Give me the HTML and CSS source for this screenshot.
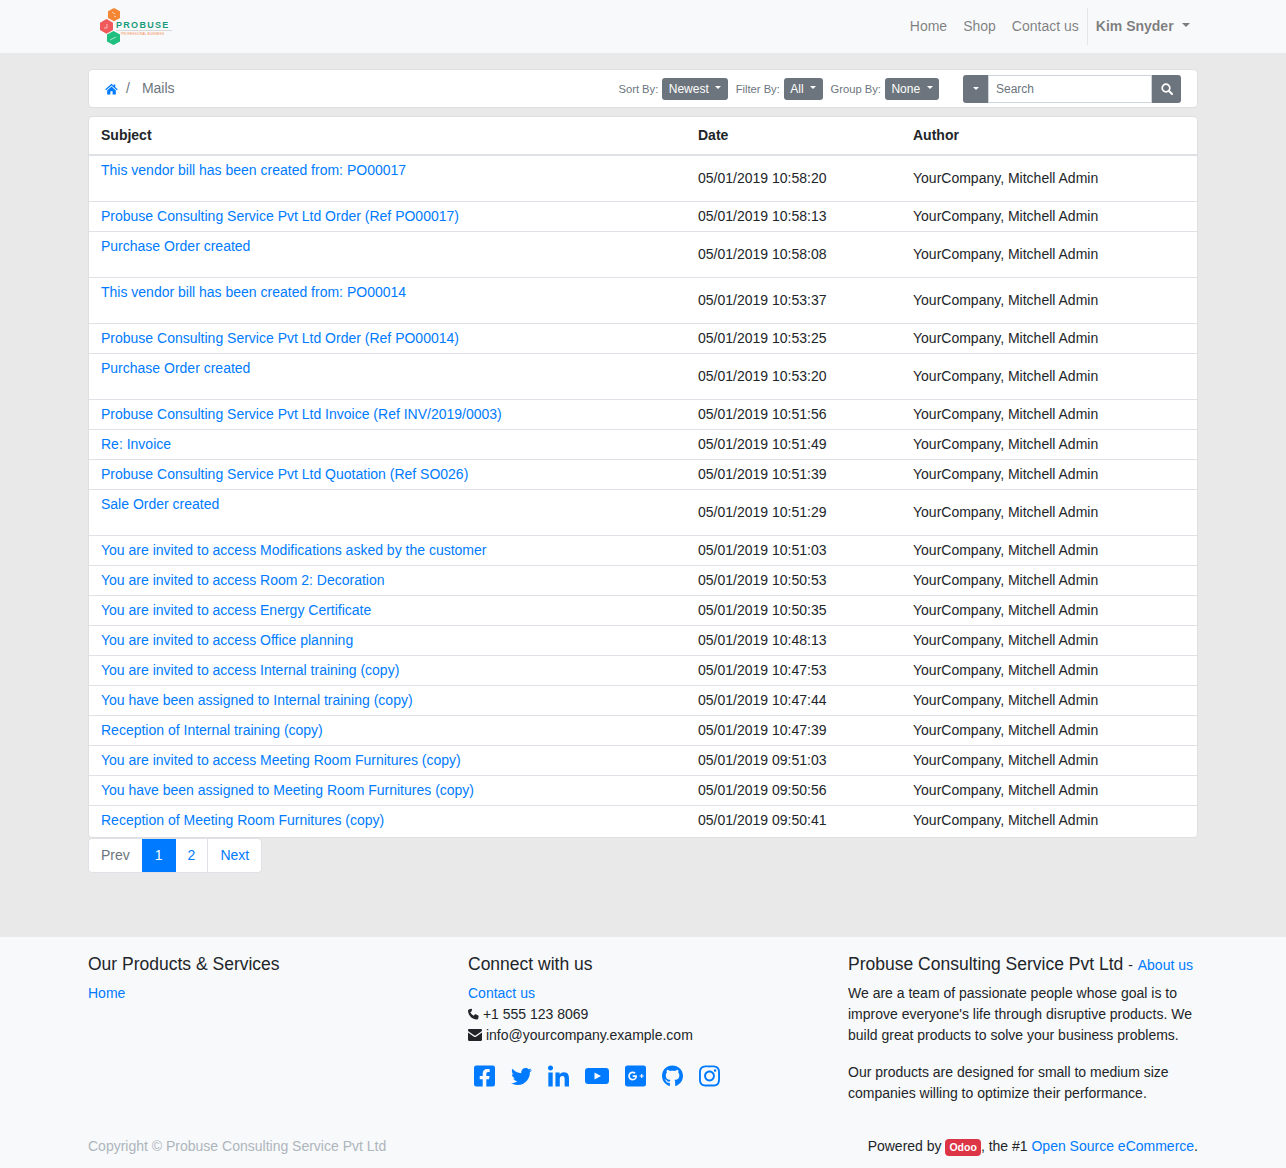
FILE: index.html
```html
<!DOCTYPE html>
<html>
<head>
    <title>Mails</title>
    <link rel="stylesheet" href="styles.css">
</head>
<body>

    <header class="topbar">
        <div class="container topbar-inner">
            <a class="logo" href="#">
                <svg class="logo-mark" width="21" height="37" viewBox="0 0 21 37">
                    <polygon points="14,0 20,3.300 20,10 14,13.300 8,10 8,3.300" fill="#f58634"/>
                    <polygon points="6.500,11 13,14.700 13,22 6.500,25.700 0,22 0,14.700" fill="#f05a5a"/>
                    <polygon points="13.500,23 20,26.500 20,33.500 13.500,37 7,33.500 7,26.500" fill="#1fbf7f"/>
                    <path d="M12 4l3 2M14 8l2 1M4 20h3v-4M10 32l6-3" stroke="#fff" stroke-width="1" fill="none" opacity=".6"/>
                </svg>
                <span class="logo-text">
                    <span class="logo-name">PROBUSE</span>
                    <span class="logo-tag">PROFESSIONAL BUSINESS</span>
                </span>
            </a>
            <nav class="topnav">
                <a href="#">Home</a>
                <a href="#">Shop</a>
                <a href="#">Contact us</a>
                <a href="#" class="user-menu">Kim Snyder <i class="caret"></i></a>
            </nav>
        </div>
    </header>

    <main class="container page">
        <div class="toolbar">
            <div class="crumbs">
                <svg class="home-icon" width="13" height="12" viewBox="0 0 24 22"><path d="M12 1.500L0.500 11.600l1.600 1.800L12 4.700l9.900 8.700 1.600-1.800-4.500-4V2.500h-3.200v2.300zM4 13.600V21h6v-6h4v6h6v-7.400l-8-7z" fill="#007bff"/></svg>
                <span class="crumb-sep">/</span>
                <span class="crumb-now">Mails</span>
            </div>
            <div class="filters">
                <span class="filter-label">Sort By:</span>
                <button class="pill">Newest <i class="caret"></i></button>
                <span class="filter-label">Filter By:</span>
                <button class="pill">All <i class="caret"></i></button>
                <span class="filter-label">Group By:</span>
                <button class="pill">None <i class="caret"></i></button>
            </div>
            <div class="searchbox">
                <button class="search-drop"><i class="caret"></i></button>
                <input class="search-input" type="text" placeholder="Search">
                <button class="search-go">
                    <svg width="12" height="12" viewBox="0 0 12 12"><circle cx="5" cy="5" r="3.800" fill="none" stroke="#fff" stroke-width="1.700"/><path d="M8 8l3 3" stroke="#fff" stroke-width="2" stroke-linecap="round"/></svg>
                </button>
            </div>
        </div>

        <div class="mail-card">
            <table class="mail-table">
                <thead>
                    <tr><th class="col-subject">Subject</th><th class="col-date">Date</th><th>Author</th></tr>
                </thead>
                <tbody>
                    <tr class="tall"><td><a href="#">This vendor bill has been created from: PO00017</a></td><td>05/01/2019 10:58:20</td><td>YourCompany, Mitchell Admin</td></tr>
                    <tr><td><a href="#">Probuse Consulting Service Pvt Ltd Order (Ref PO00017)</a></td><td>05/01/2019 10:58:13</td><td>YourCompany, Mitchell Admin</td></tr>
                    <tr class="tall"><td><a href="#">Purchase Order created</a></td><td>05/01/2019 10:58:08</td><td>YourCompany, Mitchell Admin</td></tr>
                    <tr class="tall"><td><a href="#">This vendor bill has been created from: PO00014</a></td><td>05/01/2019 10:53:37</td><td>YourCompany, Mitchell Admin</td></tr>
                    <tr><td><a href="#">Probuse Consulting Service Pvt Ltd Order (Ref PO00014)</a></td><td>05/01/2019 10:53:25</td><td>YourCompany, Mitchell Admin</td></tr>
                    <tr class="tall"><td><a href="#">Purchase Order created</a></td><td>05/01/2019 10:53:20</td><td>YourCompany, Mitchell Admin</td></tr>
                    <tr><td><a href="#">Probuse Consulting Service Pvt Ltd Invoice (Ref INV/2019/0003)</a></td><td>05/01/2019 10:51:56</td><td>YourCompany, Mitchell Admin</td></tr>
                    <tr><td><a href="#">Re: Invoice</a></td><td>05/01/2019 10:51:49</td><td>YourCompany, Mitchell Admin</td></tr>
                    <tr><td><a href="#">Probuse Consulting Service Pvt Ltd Quotation (Ref SO026)</a></td><td>05/01/2019 10:51:39</td><td>YourCompany, Mitchell Admin</td></tr>
                    <tr class="tall"><td><a href="#">Sale Order created</a></td><td>05/01/2019 10:51:29</td><td>YourCompany, Mitchell Admin</td></tr>
                    <tr><td><a href="#">You are invited to access Modifications asked by the customer</a></td><td>05/01/2019 10:51:03</td><td>YourCompany, Mitchell Admin</td></tr>
                    <tr><td><a href="#">You are invited to access Room 2: Decoration</a></td><td>05/01/2019 10:50:53</td><td>YourCompany, Mitchell Admin</td></tr>
                    <tr><td><a href="#">You are invited to access Energy Certificate</a></td><td>05/01/2019 10:50:35</td><td>YourCompany, Mitchell Admin</td></tr>
                    <tr><td><a href="#">You are invited to access Office planning</a></td><td>05/01/2019 10:48:13</td><td>YourCompany, Mitchell Admin</td></tr>
                    <tr><td><a href="#">You are invited to access Internal training (copy)</a></td><td>05/01/2019 10:47:53</td><td>YourCompany, Mitchell Admin</td></tr>
                    <tr><td><a href="#">You have been assigned to Internal training (copy)</a></td><td>05/01/2019 10:47:44</td><td>YourCompany, Mitchell Admin</td></tr>
                    <tr><td><a href="#">Reception of Internal training (copy)</a></td><td>05/01/2019 10:47:39</td><td>YourCompany, Mitchell Admin</td></tr>
                    <tr><td><a href="#">You are invited to access Meeting Room Furnitures (copy)</a></td><td>05/01/2019 09:51:03</td><td>YourCompany, Mitchell Admin</td></tr>
                    <tr><td><a href="#">You have been assigned to Meeting Room Furnitures (copy)</a></td><td>05/01/2019 09:50:56</td><td>YourCompany, Mitchell Admin</td></tr>
                    <tr><td><a href="#">Reception of Meeting Room Furnitures (copy)</a></td><td>05/01/2019 09:50:41</td><td>YourCompany, Mitchell Admin</td></tr>
                </tbody>
            </table>
        </div>

        <div class="pager">
            <a href="#" class="pager-off">Prev</a>
            <a href="#" class="pager-on">1</a>
            <a href="#" class="pager-after">2</a>
            <a href="#">Next</a>
        </div>
    </main>

    <footer class="site-footer">
        <div class="container footer-cols">
            <div class="footer-col">
                <h5>Our Products &amp; Services</h5>
                <a href="#">Home</a>
            </div>
            <div class="footer-col">
                <h5>Connect with us</h5>
                <div><a href="#">Contact us</a></div>
                <div>
                    <svg class="contact-icon" width="11" height="12" viewBox="0 0 24 24"><path d="M6.600 0.800L1.800 2C.8 2.300 0 3.200 0 4.300 0 15.200 8.800 24 19.700 24c1.100 0 2-.8 2.300-1.800l1.200-4.800c.2-1-.3-2-1.200-2.400l-5-2.200c-.9-.4-1.900-.1-2.500.6l-2 2.500c-3.300-1.600-6-4.300-7.500-7.600l2.400-2c.8-.6 1-1.600.6-2.500L9 2C8.600 1.100 7.600.6 6.600.8z" fill="#212529"/></svg>
                    +1 555 123 8069
                </div>
                <div>
                    <svg class="contact-icon" width="14" height="12" viewBox="0 0 14 12"><path d="M1.200 0h11.600C13.500 0 14 .5 14 1.200c0 .5-.3.9-.7 1.200L7.500 6.500c-.3.200-.7.200-1 0L.7 2.400C.3 2.100 0 1.700 0 1.200 0 .5.500 0 1.200 0zM0 3.500l6 4.200c.6.400 1.400.4 2 0l6-4.200v7.300c0 .7-.5 1.200-1.200 1.200H1.200C.5 12 0 11.500 0 10.800z" fill="#212529"/></svg>
                    info@yourcompany.example.com
                </div>
                <div class="socials">
                    <svg width="21" height="24" viewBox="0 0 448 512"><path d="M400 32H48A48 48 0 0 0 0 80v352a48 48 0 0 0 48 48h137.250V327.690h-63V256h63v-54.640c0-62.150 37-96.480 93.670-96.480 27.140 0 55.520 4.840 55.520 4.840v61h-31.270c-30.810 0-40.420 19.120-40.420 38.730V256h68.780l-11 71.690h-57.780V480H400a48 48 0 0 0 48-48V80a48 48 0 0 0-48-48z"/></svg>
                    <svg width="21" height="21" viewBox="0 0 512 512"><path d="M459.370 151.716c.325 4.548.325 9.097.325 13.645 0 138.720-105.583 298.558-298.558 298.558-59.452 0-114.680-17.219-161.137-47.106 8.447.974 16.568 1.299 25.340 1.299 49.055 0 94.213-16.568 130.274-44.832-46.132-.975-84.792-31.188-98.112-72.772 6.498.974 12.995 1.624 19.818 1.624 9.421 0 18.843-1.300 27.614-3.573-48.081-9.747-84.143-51.980-84.143-102.985v-1.299c13.969 7.797 30.214 12.670 47.431 13.319-28.264-18.843-46.781-51.005-46.781-87.391 0-19.492 5.197-37.360 14.294-52.954 51.655 63.675 129.300 105.258 216.365 109.807-1.624-7.797-2.599-15.918-2.599-24.040 0-57.828 46.782-104.934 104.934-104.934 30.213 0 57.502 12.670 76.670 33.137 23.715-4.548 46.456-13.320 66.599-25.340-7.798 24.366-24.366 44.833-46.132 57.827 21.117-2.273 41.584-8.122 60.426-16.243-14.292 20.791-32.161 39.308-52.628 54.253z"/></svg>
                    <svg width="21" height="24" viewBox="0 -32 448 512"><path d="M100.280 448H7.400V148.900h92.880zM53.790 108.100C24.090 108.100 0 83.500 0 53.800a53.790 53.790 0 0 1 107.580 0c0 29.700-24.100 54.300-53.790 54.300zM447.900 448h-92.680V302.400c0-34.700-.7-79.200-48.290-79.200-48.290 0-55.690 37.700-55.690 76.700V448h-92.780V148.900h89.080v40.800h1.300c12.400-23.500 42.690-48.300 87.880-48.300 94 0 111.280 61.900 111.280 142.300V448z"/></svg>
                    <svg width="24" height="16" viewBox="0 0 24 16"><path fill-rule="evenodd" d="M3 0h18c1.700 0 3 1.300 3 3v10c0 1.700-1.300 3-3 3H3c-1.700 0-3-1.300-3-3V3c0-1.700 1.300-3 3-3zm6.500 4.500v7l6.500-3.500z"/></svg>
                    <svg width="21" height="24" viewBox="0 0 448 512"><path d="M400 32H48C21.500 32 0 53.500 0 80v352c0 26.500 21.500 48 48 48h352c26.500 0 48-21.500 48-48V80c0-26.500-21.500-48-48-48zM164 352c-53 0-96-43-96-96s43-96 96-96c25.900 0 47.500 9.500 64.100 25l-26 25c-7.100-6.800-19.500-14.800-38.100-14.800-32.700 0-59.400 27.100-59.400 60.500s26.700 60.500 59.400 60.500c37.900 0 52.100-27.200 54.300-41.300H164v-32.900h90.500c.8 4.800 1.500 9.600 1.500 15.900 0 54.800-36.700 94.600-92 94.600zm236-85h-32v32h-24v-32h-32v-24h32v-32h24v32h32v24z"/></svg>
                    <svg width="21" height="24" viewBox="0 0 496 512"><path d="M244.800 8C106.100 8 0 113.300 0 252c0 110.900 69.800 205.800 169.500 239.200 12.800 2.300 17.300-5.600 17.300-12.100 0-6.200-.3-40.400-.3-61.400 0 0-70 15-84.700-29.800 0 0-11.400-29.100-27.800-36.600 0 0-22.900-15.700 1.600-15.400 0 0 24.900 2 38.600 25.800 21.900 38.600 58.600 27.500 72.900 20.900 2.300-16 8.800-27.100 16-33.700-55.900-6.200-112.300-14.300-112.300-110.500 0-27.500 7.600-41.300 23.600-58.900-2.600-6.500-11.100-33.300 2.600-67.900 20.900-6.500 69 27 69 27 20-5.600 41.500-8.500 62.800-8.500s42.800 2.900 62.800 8.500c0 0 48.100-33.600 69-27 13.700 34.700 5.200 61.400 2.600 67.900 16 17.700 25.800 31.500 25.800 58.900 0 96.500-58.900 104.200-114.800 110.500 9.200 7.900 17 22.900 17 46.400 0 33.700-.3 75.400-.3 83.600 0 6.500 4.600 14.400 17.300 12.100C428.200 457.800 496 362.900 496 252 496 113.300 383.500 8 244.800 8z"/></svg>
                    <svg width="21" height="24" viewBox="0 0 448 512"><path d="M224.100 141c-63.600 0-114.900 51.300-114.900 114.900s51.300 114.900 114.900 114.900S339 319.500 339 255.900 287.700 141 224.100 141zm0 189.600c-41.100 0-74.700-33.500-74.700-74.700s33.500-74.700 74.700-74.700 74.700 33.500 74.700 74.700-33.600 74.700-74.700 74.700zm146.400-194.300c0 14.900-12 26.800-26.800 26.800-14.900 0-26.800-12-26.800-26.800s12-26.800 26.800-26.800 26.800 12 26.800 26.800zm76.100 27.200c-1.700-35.900-9.900-67.700-36.200-93.900-26.200-26.200-58-34.400-93.900-36.200-37-2.100-147.900-2.100-184.900 0-35.800 1.700-67.600 9.900-93.900 36.100s-34.400 58-36.200 93.900c-2.100 37-2.100 147.900 0 184.900 1.700 35.900 9.900 67.700 36.200 93.900s58 34.400 93.900 36.200c37 2.100 147.900 2.100 184.900 0 35.900-1.700 67.700-9.900 93.900-36.200 26.200-26.200 34.400-58 36.200-93.900 2.100-37 2.100-147.800 0-184.800zM398.800 388c-7.800 19.600-22.900 34.700-42.600 42.600-29.500 11.700-99.500 9-132.100 9s-102.700 2.600-132.100-9c-19.600-7.800-34.700-22.900-42.600-42.600-11.700-29.500-9-99.500-9-132.100s-2.600-102.700 9-132.100c7.800-19.600 22.900-34.700 42.600-42.600 29.500-11.700 99.500-9 132.100-9s102.700-2.600 132.100 9c19.600 7.800 34.700 22.900 42.600 42.600 11.700 29.500 9 99.500 9 132.100s2.700 102.700-9 132.100z"/></svg>
                </div>
            </div>
            <div class="footer-col">
                <h5>Probuse Consulting Service Pvt Ltd <small class="about">- <a href="#">About us</a></small></h5>
                <p>We are a team of passionate people whose goal is to improve everyone's life through disruptive products. We build great products to solve your business problems.</p>
                <p>Our products are designed for small to medium size companies willing to optimize their performance.</p>
            </div>
        </div>
        <div class="container footer-bottom">
            <span class="copyright">Copyright © Probuse Consulting Service Pvt Ltd</span>
            <span>Powered by <a class="odoo-badge" href="#">Odoo</a>, the #1 <a href="#">Open Source eCommerce</a>.</span>
        </div>
    </footer>

</body>
</html>
```

FILE: styles.css
```css
* {
    box-sizing: border-box;
}

body {
    margin: 0;
    font-family: "Liberation Sans", Arial, sans-serif;
    font-size: 14px;
    line-height: 1.5;
    color: #212529;
    background-color: #e9e9e9;
}

a {
    color: #007bff;
    text-decoration: none;
}

.container {
    width: 1110px;
    margin: 0 auto;
}

/* little dropdown triangle */
.caret {
    display: inline-block;
    margin-left: .255em;
    vertical-align: .255em;
    border-top: .3em solid;
    border-left: .3em solid transparent;
    border-right: .3em solid transparent;
}

/* top bar */
.topbar {
    height: 53px;
    background-color: #f8f9fa;
}

.topbar-inner {
    display: flex;
    justify-content: space-between;
    align-items: center;
    height: 53px;
}

.logo {
    display: flex;
    align-items: center;
    margin-left: 12px;
}

.logo-mark {
    flex: none;
}

.logo-text {
    display: flex;
    flex-direction: column;
    margin-left: -5px;
    margin-top: 4px;
    width: 56px;
}

.logo-name {
    font-size: 9px;
    line-height: 9px;
    font-weight: bold;
    letter-spacing: 1.300px;
    color: #1a9c7a;
    border-bottom: 1px solid #d9d9d9;
}

.logo-tag {
    font-size: 3.300px;
    line-height: 6px;
    color: #f5905a;
    padding-left: 5px;
    white-space: nowrap;
}

.topnav {
    display: flex;
    align-items: center;
    height: 37px;
}

.topnav a {
    color: rgba(0, 0, 0, 0.5);
    padding: 0 8px;
}

.topnav .user-menu {
    font-weight: bold;
    height: 37px;
    line-height: 37px;
    border-left: 1px solid #e6e6e6;
}

.user-menu .caret {
    margin-left: 4.500px;
}

/* page */
.page {
    padding-top: 16px;
    height: 884px;
}

.toolbar {
    display: flex;
    align-items: center;
    height: 39px;
    background-color: #fff;
    border: 1px solid #dfdfdf;
    border-radius: 4px;
    padding: 0 16px;
    margin-bottom: 8px;
}

.crumbs {
    display: flex;
    align-items: center;
    flex: 1;
    color: #6c757d;
}

.crumb-sep {
    margin: 0 12px 0 8px;
}

.filters {
    display: flex;
    align-items: center;
}

.filter-label {
    font-size: 11.200px;
    color: #6c757d;
    margin: 2px 4px 0 8px;
}

.pill {
    height: 22px;
    padding: 0 6.500px;
    font-family: inherit;
    font-size: 12px;
    line-height: 18px;
    color: #fff;
    background-color: #6c757d;
    border: 0;
    border-radius: 3px;
}

.searchbox {
    display: flex;
    height: 28px;
    margin-left: 24px;
}

.search-drop,
.search-go {
    display: flex;
    align-items: center;
    justify-content: center;
    width: 25px;
    padding: 0;
    font-size: 12px;
    color: #fff;
    background-color: #6c757d;
    border: 0;
}

.search-drop .caret {
    margin-left: 0;
}

.search-drop {
    border-radius: 3px 0 0 3px;
}

.search-go {
    width: 29px;
    border-radius: 0 3px 3px 0;
}

.search-input {
    width: 164px;
    padding: 0 7px;
    font-family: inherit;
    font-size: 12px;
    color: #495057;
    background-color: #fff;
    border: 1px solid #ced4da;
    outline: 0;
}

.search-input::placeholder {
    color: #6c757d;
}

/* mail list */
.mail-card {
    background-color: #fff;
    border: 1px solid #dfdfdf;
    border-radius: 4px;
    padding-bottom: 1px;
    overflow: hidden;
}

.mail-table {
    width: 100%;
    border-collapse: collapse;
    table-layout: fixed;
}

.mail-table th {
    text-align: left;
    padding: 8px 12px;
    height: 38px;
    border-bottom: 2px solid #dee2e6;
}

.col-subject {
    width: 597px;
}

.col-date {
    width: 215px;
}

.mail-table td {
    padding: 4px 12px;
    height: 30px;
    vertical-align: middle;
    border-top: 1px solid #dee2e6;
}

.mail-table thead + tbody tr:first-child td {
    border-top: 0;
}

.mail-table tr.tall td {
    height: 46px;
}

.mail-table tr.tall td:first-child {
    padding-bottom: 20px;
}

.pager {
    display: inline-flex;
    background-color: #fff;
    border: 1px solid #dee2e6;
    border-radius: 4px;
    height: 35px;
}

.pager a {
    padding: 6px 12px;
    border-left: 1px solid #dee2e6;
}

.pager a:first-child {
    border-left: 0;
}

.pager .pager-off {
    color: #6c757d;
}

.pager .pager-on {
    color: #fff;
    background-color: #007bff;
    border-left: 1px solid #007bff;
    border-right: 1px solid #007bff;
}

.pager .pager-after {
    border-left: 0;
}

/* footer */
.site-footer {
    background-color: #f8f9fa;
    height: 231px;
    padding-top: 17px;
}

.footer-cols {
    display: flex;
    height: 182px;
}

.footer-col {
    flex: none;
    width: 380px;
}

.footer-col h5 {
    height: 21px;
    margin: 0 0 8px;
    font-size: 17.500px;
    font-weight: 500;
    line-height: 21px;
}

.footer-col p {
    margin: 0 0 16px;
    width: 350px;
}

.about {
    font-size: 14px;
}

.about a {
    margin-left: 1px;
}

.contact-icon {
    vertical-align: -1px;
}

.socials {
    display: flex;
    align-items: center;
    gap: 16px;
    margin: 18px 0 0 6px;
}

.socials svg {
    fill: #007bff;
}

.footer-bottom {
    display: flex;
    justify-content: space-between;
}

.copyright {
    color: #adb5bd;
}

.odoo-badge {
    display: inline-block;
    padding: 3px 4px;
    font-size: 10.500px;
    font-weight: bold;
    line-height: 1;
    color: #fff;
    background-color: #dc3545;
    border-radius: 4px;
}
```
